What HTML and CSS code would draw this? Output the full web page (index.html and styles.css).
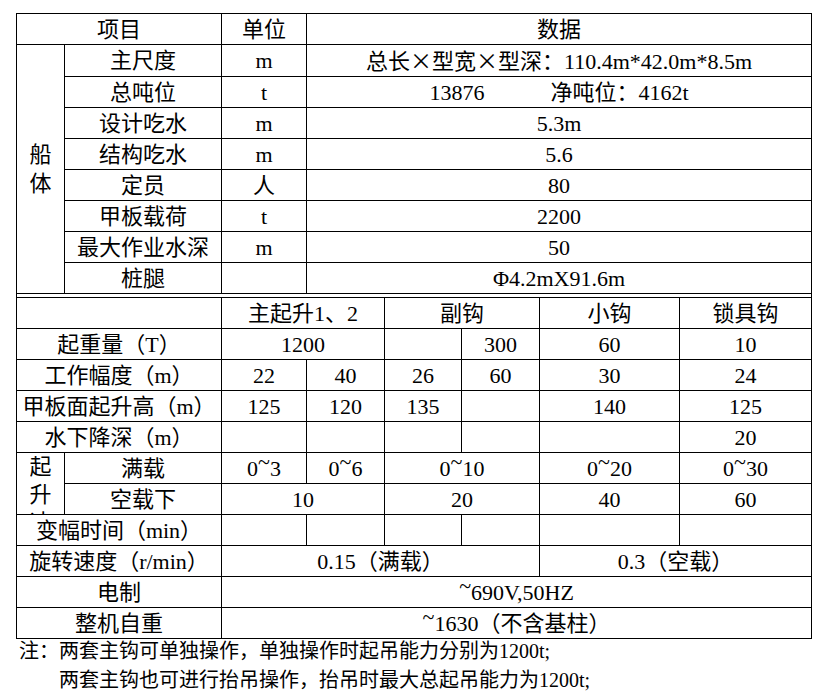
FILE: index.html
```html
<!DOCTYPE html>
<html lang="zh-CN">
<head>
<meta charset="utf-8">
<title>参数表</title>
<link rel="stylesheet" href="styles.css">
</head>
<body>
<div class="page">
<table class="spec">
<colgroup>
<col class="c1"><col class="c2"><col class="c3"><col class="c4"><col class="c5"><col class="c6"><col class="c7"><col class="c8">
</colgroup>
<tbody>
<tr><td colspan="2">项目</td><td>单位</td><td colspan="5">数据</td></tr>
<tr><td rowspan="8"><div class="vert vert-hull">船体</div></td><td>主尺度</td><td>m</td><td colspan="5">总长<span class="cjk">×</span>型宽<span class="cjk">×</span>型深：110.4m*42.0m*8.5m</td></tr>
<tr><td>总吨位</td><td>t</td><td colspan="5" class="pre">13876            净吨位：4162t</td></tr>
<tr><td>设计吃水</td><td>m</td><td colspan="5">5.3m</td></tr>
<tr><td>结构吃水</td><td>m</td><td colspan="5">5.6</td></tr>
<tr><td>定员</td><td>人</td><td colspan="5">80</td></tr>
<tr><td>甲板载荷</td><td>t</td><td colspan="5">2200</td></tr>
<tr><td>最大作业水深</td><td>m</td><td colspan="5">50</td></tr>
<tr><td>桩腿</td><td></td><td colspan="5">Φ4.2mX91.6m</td></tr>
<tr class="spacer"><td colspan="8"></td></tr>
<tr><td colspan="2"></td><td colspan="2">主起升1、2</td><td colspan="2">副钩</td><td>小钩</td><td>锁具钩</td></tr>
<tr><td colspan="2">起重量（T）</td><td colspan="2">1200</td><td></td><td>300</td><td>60</td><td>10</td></tr>
<tr><td colspan="2">工作幅度（m）</td><td>22</td><td>40</td><td>26</td><td>60</td><td>30</td><td>24</td></tr>
<tr><td colspan="2">甲板面起升高（m）</td><td>125</td><td>120</td><td>135</td><td></td><td>140</td><td>125</td></tr>
<tr><td colspan="2">水下降深（m）</td><td></td><td></td><td></td><td></td><td></td><td>20</td></tr>
<tr><td rowspan="2" class="top"><div class="vert vert-speed">起升速</div></td><td>满载</td><td>0<span class="tl">~</span>3</td><td>0<span class="tl">~</span>6</td><td colspan="2">0<span class="tl">~</span>10</td><td>0<span class="tl">~</span>20</td><td>0<span class="tl">~</span>30</td></tr>
<tr><td>空载下</td><td colspan="2">10</td><td colspan="2">20</td><td>40</td><td>60</td></tr>
<tr><td colspan="2">变幅时间（min）</td><td></td><td></td><td></td><td></td><td></td><td></td></tr>
<tr><td colspan="2">旋转速度（r/min）</td><td colspan="4">0.15（满载）</td><td colspan="2">0.3（空载）</td></tr>
<tr><td colspan="2">电制</td><td colspan="6"><span class="tl">~</span>690V,50HZ</td></tr>
<tr><td colspan="2">整机自重</td><td colspan="6"><span class="tl">~</span>1630（不含基柱）</td></tr>
</tbody>
</table>
<div class="notes">
<div class="note">注：两套主钩可单独操作，单独操作时起吊能力分别为1200t;</div>
<div class="note cont">两套主钩也可进行抬吊操作，抬吊时最大总起吊能力为1200t;</div>
</div>
</div>
</body>
</html>
```
FILE: styles.css
```css
html, body {
  margin: 0;
  padding: 0;
  background: #ffffff;
}
body {
  color: #000000;
  font-family: "Liberation Serif", "Noto Sans CJK SC", serif;
}
.page {
  padding-top: 13px;
}
.spec {
  margin-left: 16px;
  border-collapse: collapse;
  table-layout: fixed;
  width: 796px;
  font-size: 22px;
}
.c1 { width: 48px; }
.c2 { width: 157px; }
.c3 { width: 85px; }
.c4 { width: 78px; }
.c5 { width: 77px; }
.c6 { width: 78px; }
.c7 { width: 140px; }
.c8 { width: 132px; }
.spec tr {
  height: 31px;
}
.spec td {
  border: 1px solid #000000;
  padding: 0;
  text-align: center;
  vertical-align: middle;
  line-height: 29px;
  white-space: nowrap;
}
.spec td.pre {
  white-space: pre;
}
.spec td.top {
  vertical-align: top;
}
.spec tr.spacer {
  height: 4px;
}
.spec tr.spacer td {
  height: 3px;
  line-height: 0;
  font-size: 0;
}
.cjk {
  font-family: "Noto Sans CJK SC", sans-serif;
}
.vert {
  width: 1em;
  margin: 0 auto;
  white-space: normal;
  line-height: 29px;
}
.vert-speed {
  height: 61px;
  overflow: hidden;
  line-height: 28px;
}
.tl {
  line-height: 0;
  vertical-align: 0.32em;
}
.notes {
  display: flex;
  flex-direction: column;
  gap: 4px;
  padding-left: 19px;
  font-size: 20px;
}
.note {
  line-height: 25px;
  white-space: nowrap;
}
.note.cont {
  padding-left: 40px;
}
```
